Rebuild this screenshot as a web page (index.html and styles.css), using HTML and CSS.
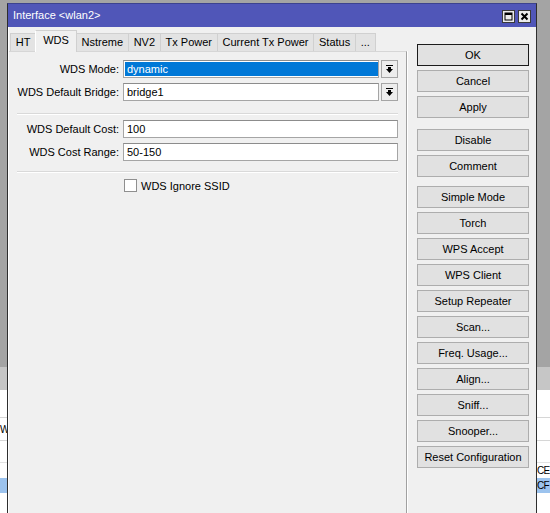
FILE: index.html
```html
<!DOCTYPE html>
<html>
<head>
<meta charset="utf-8">
<title>Interface wlan2</title>
<link rel="stylesheet" href="styles.css">
</head>
<body>
<div class="desk">
  <div class="bgwin">
    <div class="bg-head"></div>
    <div class="bg-row r1"><span></span><span></span></div>
    <div class="bg-row r2"><span class="l">Wi</span><span></span></div>
    <div class="bg-row r3"><span></span><span></span></div>
    <div class="bg-row r4"><span></span><span class="r">CE</span></div>
    <div class="bg-row r5 sel"><span></span><span class="r">CF</span></div>
  </div>

  <div class="dialog">
    <div class="titlebar">
      <span class="title">Interface &lt;wlan2&gt;</span>
      <div class="tb-btns">
        <svg class="tb-btn" width="13" height="13" viewBox="0 0 13 13">
          <rect x="0.5" y="0.5" width="12" height="12" fill="#ececec" stroke="#3a3a3a"/>
          <rect x="3" y="3" width="7" height="7" fill="none" stroke="#000" stroke-width="1"/>
          <rect x="3" y="3" width="7" height="2" fill="#000"/>
        </svg>
        <svg class="tb-btn" width="13" height="13" viewBox="0 0 13 13">
          <rect x="0.5" y="0.5" width="12" height="12" fill="#ececec" stroke="#3a3a3a"/>
          <path d="M3.5 3.5 L9.5 9.5 M9.5 3.5 L3.5 9.5" stroke="#000" stroke-width="2"/>
        </svg>
      </div>
    </div>

    <div class="body">
      <div class="tabctl">
        <div class="tabs">
          <div class="tab">HT</div>
          <div class="tab active">WDS</div>
          <div class="tab">Nstreme</div>
          <div class="tab">NV2</div>
          <div class="tab">Tx Power</div>
          <div class="tab">Current Tx Power</div>
          <div class="tab">Status</div>
          <div class="tab">...</div>
        </div>
        <div class="panel">
          <div class="row">
            <label class="lbl">WDS Mode:</label>
            <div class="field">
              <div class="input sel-input"><span class="hl">dynamic</span></div>
              <div class="dd">
                <svg width="9" height="9" viewBox="0 0 9 9">
                  <rect x="1" y="0" width="7" height="1" fill="#000"/>
                  <rect x="3" y="2" width="3" height="2" fill="#000"/>
                  <path d="M1 4 H8 L4.5 8 Z" fill="#000"/>
                </svg>
              </div>
            </div>
          </div>
          <div class="row">
            <label class="lbl">WDS Default Bridge:</label>
            <div class="field">
              <div class="input">bridge1</div>
              <div class="dd">
                <svg width="9" height="9" viewBox="0 0 9 9">
                  <rect x="1" y="0" width="7" height="1" fill="#000"/>
                  <rect x="3" y="2" width="3" height="2" fill="#000"/>
                  <path d="M1 4 H8 L4.5 8 Z" fill="#000"/>
                </svg>
              </div>
            </div>
          </div>
          <div class="sep"></div>
          <div class="row">
            <label class="lbl">WDS Default Cost:</label>
            <div class="field"><div class="input">100</div></div>
          </div>
          <div class="row">
            <label class="lbl">WDS Cost Range:</label>
            <div class="field"><div class="input">50-150</div></div>
          </div>
          <div class="sep sep2"></div>
          <div class="row check-row">
            <span></span>
            <div class="check"><span class="box"></span><span>WDS Ignore SSID</span></div>
          </div>
        </div>
      </div>

      <div class="btncol">
        <div class="btn default">OK</div>
        <div class="btn">Cancel</div>
        <div class="btn">Apply</div>
        <div class="btn grp1">Disable</div>
        <div class="btn">Comment</div>
        <div class="btn grp2">Simple Mode</div>
        <div class="btn">Torch</div>
        <div class="btn">WPS Accept</div>
        <div class="btn">WPS Client</div>
        <div class="btn">Setup Repeater</div>
        <div class="btn">Scan...</div>
        <div class="btn">Freq. Usage...</div>
        <div class="btn">Align...</div>
        <div class="btn">Sniff...</div>
        <div class="btn">Snooper...</div>
        <div class="btn">Reset Configuration</div>
      </div>
    </div>
  </div>
</div>
</body>
</html>
```

FILE: styles.css
```css
* { box-sizing: border-box; }

html, body {
  margin: 0;
  padding: 0;
}

body {
  width: 550px;
  height: 513px;
  overflow: hidden;
  background: #a4a4a4;
  font-family: "Liberation Sans", Arial, sans-serif;
  font-size: 11px;
  color: #000;
}

.desk {
  position: relative;
  width: 550px;
  height: 513px;
  overflow: hidden;
}

/* background window behind the dialog */
.bgwin {
  position: absolute;
  left: 0;
  right: 0;
  top: 367px;
  bottom: 0;
  background: #fff;
}

.bg-head {
  height: 23px;
  background: #c6c6c6;
}

.bg-row {
  display: grid;
  grid-template-columns: 537px 13px;
  align-items: center;
  white-space: nowrap;
}

.bg-row .l {
  font-size: 10px;
  letter-spacing: -1px;
}

.bg-row .r {
  font-size: 10px;
  letter-spacing: -0.8px;
}

.r1 { height: 28px; border-bottom: 1px solid #d6d6d6; }
.r2 { height: 23px; border-bottom: 1px solid #d6d6d6; }
.r3 { height: 22px; border-bottom: 1px solid #e2e2e2; }
.r4 { height: 15px; }
.r5 { height: 15px; }
.sel { background: #9cc3ee; }

/* dialog window */
.dialog {
  position: absolute;
  left: 7px;
  top: 3px;
  width: 530px;
  height: 540px;
  background: #f0f0f0;
  border-left: 1px solid #2e2e2e;
  border-right: 1px solid #2e2e2e;
  border-top: 1px solid #3c428f;
  display: flex;
  flex-direction: column;
}

.titlebar {
  height: 23px;
  flex: none;
  background: #5056b8;
  color: #fff;
  display: flex;
  align-items: center;
  justify-content: space-between;
  padding: 0 5px 0 5px;
}

.title {
  font-size: 11px;
  line-height: 13px;
}

.tb-btns {
  display: flex;
  gap: 3px;
  padding-top: 2px;
}

.tb-btn { display: block; }

.body {
  flex: 1;
  display: flex;
  box-shadow: inset 1px 0 #ffffff;
}

.tabctl {
  width: 399px;
  flex: none;
  padding-left: 1px;
  display: flex;
  flex-direction: column;
}

.tabs {
  height: 24px;
  flex: none;
  display: flex;
  align-items: flex-end;
  padding-left: 1px;
}

.tab {
  height: 18px;
  line-height: 17px;
  padding: 0 4.75px;
  background: #e3e3e3;
  border: 1px solid #d0d0d0;
  border-bottom: none;
  margin-left: -1px;
  white-space: nowrap;
}

.tab:first-child { margin-left: 0; }

.tab.active {
  height: 22px;
  line-height: 19px;
  padding: 0 7px;
  background: #f0f0f0;
  border-color: #d0d0d0;
  border-left-color: #ffffff;
  margin-bottom: -1px;
  position: relative;
  z-index: 1;
}

.panel {
  flex: 1;
  display: flex;
  flex-direction: column;
  background: #f0f0f0;
  border-top: 1px solid #d6d6d6;
  border-right: 1px solid #a0a0a0;
  box-shadow: 1px 0 #ffffff;
  padding: 8px 8px 0 0;
}

.row {
  display: grid;
  grid-template-columns: 110px 1fr;
  column-gap: 4px;
  align-items: center;
  height: 18px;
  flex: none;
  margin-bottom: 5px;
}

.lbl {
  text-align: right;
  white-space: nowrap;
}

.field {
  display: flex;
  height: 18px;
  gap: 2px;
}

.input {
  flex: 1;
  height: 18px;
  background: #fff;
  border: 1px solid #a5a5a5;
  border-top-color: #8c8c8c;
  padding: 0 3px;
  line-height: 16px;
  white-space: nowrap;
}

.sel-input {
  padding: 1px 0 1px 1px;
}

.hl {
  display: block;
  height: 14px;
  line-height: 14px;
  background: #0078d7;
  color: #fff;
  padding-left: 2px;
}

.dd {
  width: 17px;
  height: 18px;
  flex: none;
  border: 1px solid #a5a5a5;
  background: #ededed;
  display: flex;
  align-items: center;
  justify-content: center;
}

.dd svg { display: block; }

.sep {
  height: 2px;
  flex: none;
  margin: 7px 0 5px 8px;
  border-top: 1px solid #d9d9d9;
  border-bottom: 1px solid #ffffff;
}

.sep2 { margin-top: 5px; margin-bottom: 6px; }

.check-row { height: 13px; }

.check {
  display: flex;
  align-items: center;
  gap: 4px;
  padding-left: 1px;
}

.box {
  width: 13px;
  height: 13px;
  background: #fff;
  border: 1px solid #8f8f8f;
}

.btncol {
  flex: 1;
  display: flex;
  flex-direction: column;
  padding: 17px 0 0 10px;
}

.btn {
  width: 112px;
  height: 22px;
  line-height: 20px;
  text-align: center;
  background: #e1e1e1;
  border: 1px solid #adadad;
  margin-bottom: 4px;
  white-space: nowrap;
}

.btn.default { border-color: #1c1c1c; }

.grp1 { margin-top: 7px; }
.grp2 { margin-top: 5px; }
```
